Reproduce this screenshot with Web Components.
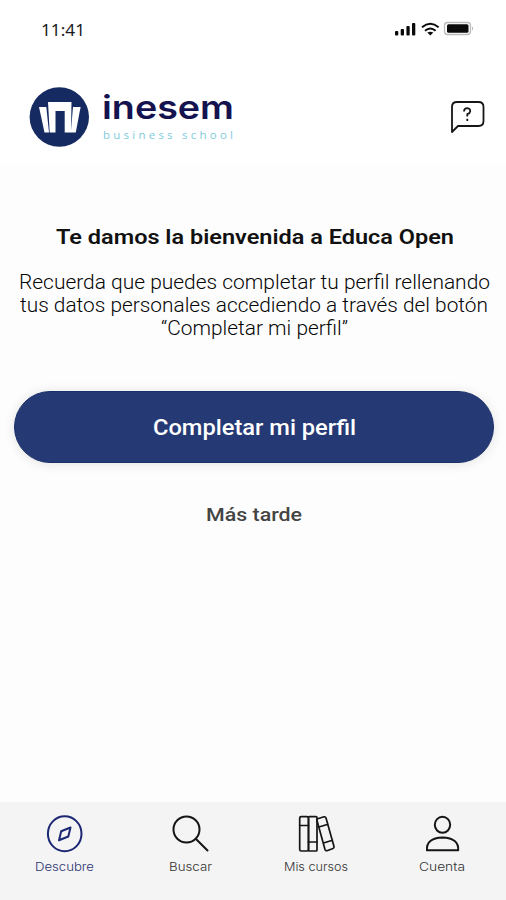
<!DOCTYPE html>
<html lang="es">
<head>
<meta charset="utf-8">
<title>Educa Open</title>
<style>
html,body{margin:0;height:100%;overflow:hidden;background:#fdfdfd}
body{font-family:Inter,"Liberation Sans",sans-serif;color:#111}
</style>
</head>
<body>
<welcome-screen></welcome-screen>
<script>
const define=(name,html,init)=>customElements.define(name,class extends HTMLElement{
  constructor(){super();this.attachShadow({mode:"open"}).innerHTML=html;}
  connectedCallback(){if(init)init(this);}
});

/* A single line of text fitted to the width given in its attribute:
   widened by default, or tracked out with the "tracked" attribute. */
define("fit-text",`<style>
:host{display:block;white-space:nowrap}
span{display:inline-block;transform-origin:0 50%}
</style><span><slot></slot></span>`,el=>{
  const w=+el.getAttribute("width");
  el.style.width=w+"px";
  const s=el.shadowRoot.querySelector("span");
  const natural=s.getBoundingClientRect().width;
  if(el.hasAttribute("tracked"))s.style.letterSpacing=((w-natural)/(el.textContent.length-1))+"px";
  else s.style.transform="scaleX("+w/natural+")";
});

define("status-bar",`<style>
:host{display:flex;justify-content:space-between;height:60px;box-sizing:border-box;padding:18px 32px 0 41px}
fit-text{font:17px/24px "Noto Sans","Open Sans",sans-serif;color:#1a1a1a}
svg{display:block}
</style>
<fit-text width="44">11:41</fit-text>
<svg width="80" height="24" viewBox="394 18 80 24">
<g fill="#0a0a0a"><rect x="395" y="31" width="3.3" height="4.5" rx="1"/><rect x="400.7" y="29" width="3.3" height="6.5" rx="1"/><rect x="406.4" y="26" width="3.3" height="9.5" rx="1"/><rect x="412" y="23" width="3.3" height="12.5" rx="1"/></g>
<g fill="none" stroke="#0a0a0a" stroke-width="2"><path d="M422 27.2q8.3-6.8 16.6 0M425 30.800q5.300-4.600 10.600 0"/></g>
<path d="M427.300 32.600q3-1.800 6 0l-3 3z" fill="#0a0a0a"/>
<rect x="444.500" y="22.500" width="26" height="12" rx="3" fill="#fff" stroke="#bbb" stroke-width="1.300"/><path d="M472 26.500q2 2 0 4z" fill="#aaa"/><rect x="447" y="24.200" width="21.500" height="8.600" rx="1.500" fill="#0a0a0a"/>
</svg>`);

define("brand-logo",`<style>
:host{display:flex;gap:13px}
.words{padding-top:1px}
.name{font:600 33px/40px Inter,sans-serif;color:#15134f}
.sub{font:400 11.5px/16px "Open Sans",sans-serif;color:#7fcbdc;margin:0 0 0 1px}
</style>
<svg width="60" height="62" viewBox="29 86 60 62"><circle cx="59.300" cy="117" r="29.700" fill="#142a61"/>
<g fill="#fff"><path d="M48 102H71.500L71 132.500H64.700V111H55.500V132.500H49.700Z"/><path d="M39 107h7.300l2.700 25.500h-4.500Z"/><path d="M73 107h7.600l-4.800 25.500h-5Z"/></g></svg>
<div class="words"><fit-text class="name" width="132">inesem</fit-text><fit-text class="sub" tracked width="130">business school</fit-text></div>`);

define("help-icon",`<style>:host{display:block}svg{display:block}</style>
<svg width="36" height="36" viewBox="450 100 36 36" fill="none" stroke="#161616" stroke-width="1.800" stroke-linejoin="round"><path d="M452 132V107Q452 102 457 102H478.500Q483.500 102 483.500 107V121Q483.500 126 478.500 126H458Z"/><path d="M464 111.500Q464.200 108.200 467.300 108.200Q470.500 108.500 470.200 111.300Q470 113.200 467.300 114.200V116.500M467.300 118.700V121"/></svg>`);

define("app-header",`<style>
:host{display:flex;justify-content:space-between;align-items:flex-start;height:105px;box-sizing:border-box;padding:26px 20px 0 29px}
help-icon{margin-top:14px}
</style><brand-logo></brand-logo><help-icon></help-icon>`);

define("pill-button",`<style>
:host{display:block}
button{all:unset;box-sizing:border-box;display:flex;justify-content:center;align-items:center;width:480px;height:72px;border-radius:36px;background:#253a75;color:#fff;box-shadow:0 1px 12px #0000001c;border:1px solid #1a3068;padding-top:2px;font:500 22px/26px Roboto,sans-serif}
</style><button><slot></slot></button>`);

define("welcome-message",`<style>
:host{display:flex;flex-direction:column;align-items:center;padding-top:58px;font-family:Roboto,sans-serif}
h1,p{margin:0}
h1{font:600 21px/28px Roboto,sans-serif;color:#111;margin-left:3px}
p{display:flex;flex-direction:column;align-items:center;font:300 20px/23px Roboto,sans-serif;color:#050505;margin:20px 0 0 2px}
pill-button{margin:51px 0 0 2px}
.later{font:500 19px/24px Roboto,sans-serif;color:#444;margin:40px 0 0 2px}
</style>
<h1><fit-text width="398">Te damos la bienvenida a Educa Open</fit-text></h1>
<p><fit-text width="471">Recuerda que puedes completar tu perfil rellenando</fit-text><fit-text width="468">tus datos personales accediendo a través del botón</fit-text><fit-text width="187">“Completar mi perfil”</fit-text></p>
<pill-button><fit-text width="203">Completar mi perfil</fit-text></pill-button>
<fit-text class="later" width="96">Más tarde</fit-text>`);

define("nav-item",`<style>
:host{display:flex;flex-direction:column;align-items:center;width:126px;color:#111;font:300 12px/16px Inter,sans-serif}
.label{color:#333;margin-top:5px}
:host([active]) .label{color:#2d3575}
</style><slot name="icon"></slot><div class="label"><slot></slot></div>`);

define("bottom-nav",`<style>
:host{display:flex;justify-content:center;height:98px;box-sizing:border-box;padding:12px 0 0;background:#f4f4f4}
svg{display:block;fill:none;stroke:#151515;stroke-width:2;stroke-linejoin:round;stroke-linecap:round}
</style>
<nav-item active><svg slot="icon" width="40" height="40" viewBox="44 814 40 40" style="stroke:#1d2875"><ellipse cx="64.700" cy="833.800" rx="16.800" ry="17.500"/><path d="M70.500 827.500L68.300 836.500L59 840.300L61.200 831.300Z"/></svg><fit-text width="59">Descubre</fit-text></nav-item>
<nav-item><svg slot="icon" width="40" height="40" viewBox="170 814 40 40"><circle cx="186.500" cy="829.500" r="13"/><path d="M196 839L207.500 850.500"/></svg><fit-text width="43">Buscar</fit-text></nav-item>
<nav-item><svg slot="icon" width="40" height="40" viewBox="296 814 40 40" style="stroke-width:1.700"><rect x="299.700" y="816.700" width="8.800" height="34.300" rx="1.500"/><rect x="308.500" y="816.700" width="8.500" height="34.300" rx="1"/><path d="M299.700 825.500h8.800M308.500 842h8.500M317 819L324 816.800Q325.500 816.500 326 818L334 846.500Q334.300 848 333 848.500L327 850.700Q325.500 851 325 849.500L317 820.500M319 827L328 824.200M323.500 843L332.500 840.200"/></svg><fit-text width="64">Mis cursos</fit-text></nav-item>
<nav-item><svg slot="icon" width="40" height="40" viewBox="422 814 40 40"><ellipse cx="442.500" cy="824.800" rx="7.700" ry="8"/><path d="M427 850.300Q426 838 442.500 837.500Q459 838 458.200 850.300Z"/></svg><fit-text width="46">Cuenta</fit-text></nav-item>`);

define("welcome-screen",`<style>
:host{display:flex;flex-direction:column;height:900px;width:506px;background:#fdfdfd}
.top{background:#fff}
welcome-message{flex:1}
</style><div class="top"><status-bar></status-bar><app-header></app-header></div><welcome-message></welcome-message><bottom-nav></bottom-nav>`);
</script>
</body>
</html>
